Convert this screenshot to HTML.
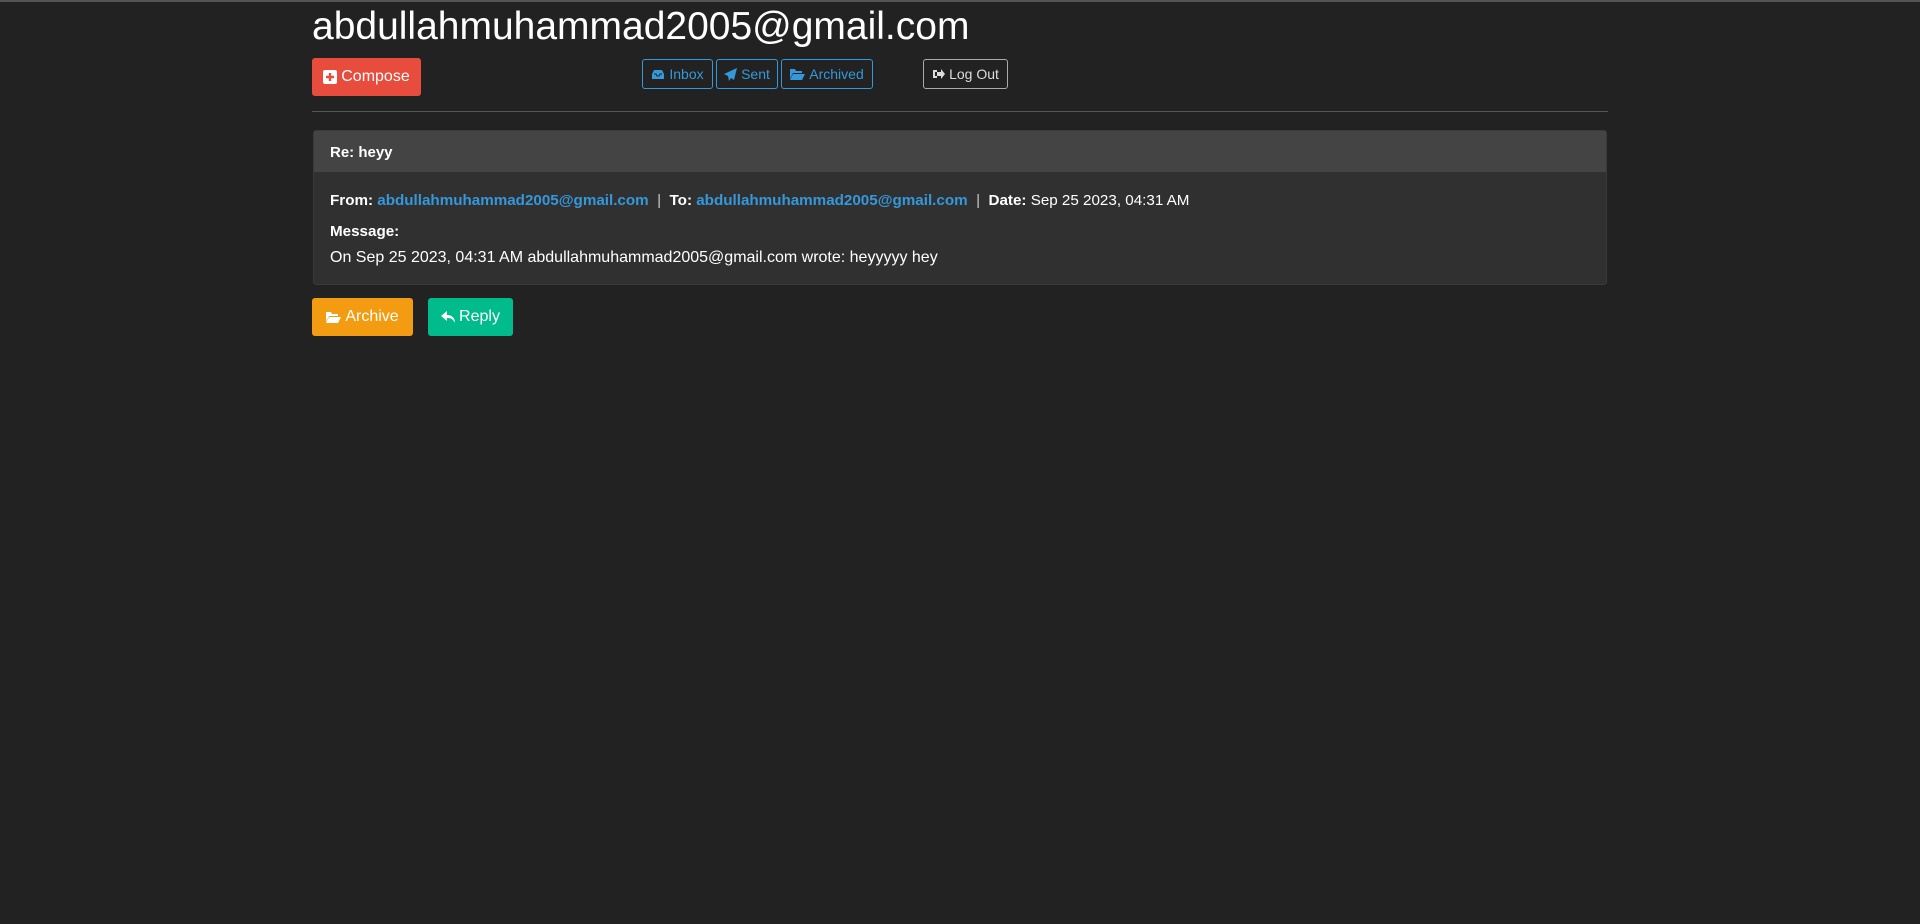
<!DOCTYPE html>
<html><head><meta charset="utf-8"><style>
*{box-sizing:border-box}
body{margin:0;background:#222;color:#fff;font-family:"Liberation Sans",sans-serif;font-size:15px;border-top:2px solid #555;height:924px;overflow:hidden}
h1{position:absolute;left:312px;top:5px;margin:0;font-weight:400;font-size:39px;letter-spacing:0}
.btn{position:absolute;display:flex;align-items:center;justify-content:center;gap:4px;border-radius:3px;font-size:14px}
.o{border:1px solid #3498db;color:#3498db;height:30px;top:59px}
svg{display:block}
hr{position:absolute;left:312px;width:1296px;top:111px;margin:0;border:0;border-top:1px solid #555}
.card{position:absolute;left:313px;width:1294px;top:130px;height:155px;background:#303030;border:1px solid #3a3a3a;border-radius:3px}
.hd{height:41px;background:#444;padding:13px 16px;font-weight:bold;font-size:15px}
.b{padding:20px 16px;font-size:15.2px;line-height:1.2}
a{color:#3498db;font-weight:bold;text-decoration:none}
</style></head><body>
<h1>abdullahmuhammad2005@gmail.com</h1>
<div class="btn" style="left:312px;top:58px;width:109px;height:38px;background:#e74c3c;font-size:16px"><svg width="14" height="14"><rect width="14" height="14" rx="2" fill="#fff"/><path d="M7 3v8M3 7h8" stroke="#e74c3c" stroke-width="2.4"/></svg>Compose</div>
<div class="btn o" style="left:642px;width:71px"><svg width="14" height="11"><path d="M1 5l2-4h8l2 4v5H1z" fill="#3498db"/><path d="M3 5h2l1 2h2l1-2h2" stroke="#222" fill="none"/></svg>Inbox</div>
<div class="btn o" style="left:716px;width:62px"><svg width="13" height="13"><path d="M13 0L0 6l4 2 1 5 2-3 3 2z" fill="#3498db"/></svg>Sent</div>
<div class="btn o" style="left:781px;width:92px"><svg width="15" height="12"><path d="M0 1h5l1 2h6v2H3L0 11z M3 6h12l-3 6H0z" fill="#3498db"/></svg>Archived</div>
<div class="btn" style="left:923px;top:59px;width:85px;height:30px;border:1px solid #aaa;color:#ddd"><svg width="13" height="12"><path d="M1 2h4v2H3v4h2v2H1z M5 4h4V1l4 5-4 5V8H5z" fill="#ddd"/></svg>Log Out</div>
<hr>
<div class="card"><div class="hd">Re: heyy</div>
<div class="b"><b>From:</b> <a>abdullahmuhammad2005@gmail.com</a> &nbsp;<span style="color:#ccc">|</span>&nbsp; <b>To:</b> <a>abdullahmuhammad2005@gmail.com</a> &nbsp;<span style="color:#ccc">|</span>&nbsp; <b>Date:</b> Sep 25 2023, 04:31 AM
<div style="margin-top:13px"><b>Message:</b></div>
<div style="margin-top:7px;font-size:16px">On Sep 25 2023, 04:31 AM abdullahmuhammad2005@gmail.com wrote: heyyyyy hey</div></div></div>
<div class="btn" style="left:312px;top:298px;width:101px;height:38px;background:#f39c12;font-size:16px"><svg width="15" height="12"><path d="M0 1h5l1 2h6v2H3L0 11z M3 6h12l-3 6H0z" fill="#fff"/></svg>Archive</div>
<div class="btn" style="left:428px;top:298px;width:85px;height:38px;background:#00bc8c;font-size:16px"><svg width="14" height="13"><path d="M6 0L0 5l6 5V7c4 0 6 1 8 5 0-5-3-8-8-8z" fill="#fff"/></svg>Reply</div>
</body></html>
